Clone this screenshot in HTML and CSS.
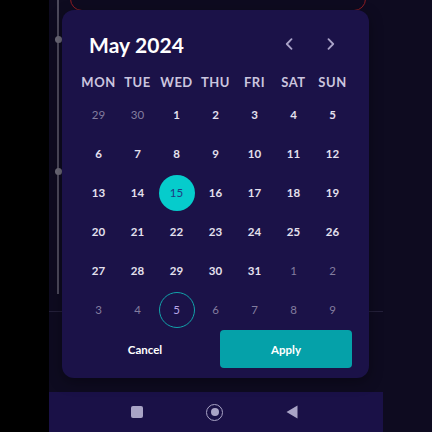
FILE: index.html
```html
<!DOCTYPE html>
<html>
<head>
<meta charset="utf-8">
<link rel="stylesheet" href="styles.css">
</head>
<body>
<div class="bezel"></div>
<div class="screen">
  <div class="app">
    <div class="red-box"></div>
    <div class="timeline">
      <span class="dot dot-1"></span>
      <span class="dot dot-2"></span>
    </div>
    <div class="hline"></div>

    <div class="card">
      <div class="header">
        <div class="title">May 2024</div>
        <div class="navs">
          <button class="chev" aria-label="Previous month">
            <svg width="10" height="12" viewBox="0 0 10 12"><path d="M7.5 1.2 L2.8 6 L7.5 10.8" fill="none" stroke="#aaa3c8" stroke-width="1.8" stroke-linecap="round" stroke-linejoin="round"/></svg>
          </button>
          <button class="chev" aria-label="Next month">
            <svg width="10" height="12" viewBox="0 0 10 12"><path d="M2.5 1.2 L7.2 6 L2.5 10.8" fill="none" stroke="#aaa3c8" stroke-width="1.8" stroke-linecap="round" stroke-linejoin="round"/></svg>
          </button>
        </div>
      </div>
      <div class="weekdays">
        <span>MON</span><span>TUE</span><span>WED</span><span>THU</span><span>FRI</span><span>SAT</span><span>SUN</span>
      </div>
      <div class="days">
        <span class="d other">29</span><span class="d other">30</span><span class="d">1</span><span class="d">2</span><span class="d">3</span><span class="d">4</span><span class="d">5</span>
        <span class="d">6</span><span class="d">7</span><span class="d">8</span><span class="d">9</span><span class="d">10</span><span class="d">11</span><span class="d">12</span>
        <span class="d">13</span><span class="d">14</span><span class="d selected"><i>15</i></span><span class="d">16</span><span class="d">17</span><span class="d">18</span><span class="d">19</span>
        <span class="d">20</span><span class="d">21</span><span class="d">22</span><span class="d">23</span><span class="d">24</span><span class="d">25</span><span class="d">26</span>
        <span class="d">27</span><span class="d">28</span><span class="d">29</span><span class="d">30</span><span class="d">31</span><span class="d other">1</span><span class="d other">2</span>
        <span class="d other">3</span><span class="d other">4</span><span class="d today"><i>5</i></span><span class="d other">6</span><span class="d other">7</span><span class="d other">8</span><span class="d other">9</span>
      </div>
      <div class="actions">
        <button class="btn cancel">Cancel</button>
        <button class="btn apply">Apply</button>
      </div>
    </div>
  </div>
  <div class="navbar">
    <span class="nav-square"></span>
    <span class="nav-home"><span></span></span>
    <svg class="nav-back" width="12" height="14" viewBox="0 0 12 14"><path d="M11.5 0.5 L11.5 13.5 L0.5 7 Z" fill="#a9a4c6"/></svg>
  </div>
</div>
<div class="outside"></div>
</body>
</html>
```

FILE: styles.css
```css
* { box-sizing: border-box; }
html, body { margin: 0; padding: 0; }
body {
  width: 432px;
  height: 432px;
  display: flex;
  overflow: hidden;
  background: #0e0b20;
  font-family: "Lato", "Noto Sans", sans-serif;
}
.bezel { width: 49px; background: #000; flex: none; }
.outside { flex: 1; background: #0e0b20; }
.screen {
  width: 334px;
  flex: none;
  display: flex;
  flex-direction: column;
  background: #0e0b20;
}
.app { flex: 1; position: relative; }
.red-box {
  position: absolute;
  left: 21px;
  width: 296px;
  top: -20px;
  height: 31px;
  border: 1.5px solid #8e1c22;
  border-radius: 12px;
}
.timeline {
  position: absolute;
  left: 8px;
  top: 0;
  width: 2px;
  height: 294px;
  background: #4d4a5c;
}
.dot {
  position: absolute;
  left: -2.5px;
  width: 7px;
  height: 7px;
  border-radius: 50%;
  background: #6c6a78;
}
.dot-1 { top: 36px; }
.dot-2 { top: 168px; }
.hline {
  position: absolute;
  left: 0;
  right: 0;
  top: 311px;
  height: 1px;
  background: #24203a;
}
.card {
  position: absolute;
  left: 13px;
  top: 10px;
  width: 307px;
  height: 368px;
  background: #1b1248;
  border-radius: 12px;
  padding: 20px 17px 10px;
  box-shadow: 0 4px 14px rgba(0,0,0,0.35);
  display: flex;
  flex-direction: column;
}
.header {
  height: 28px;
  display: flex;
  align-items: center;
  justify-content: space-between;
  padding-left: 10px;
  padding-right: 5px;
}
.title {
  color: #ffffff;
  font-size: 21px;
  font-weight: 700;
  letter-spacing: 0.1px;
}
.navs { display: flex; gap: 10px; }
.chev {
  width: 32px;
  height: 28px;
  border: 0;
  background: transparent;
  padding: 0;
  display: flex;
  align-items: center;
  justify-content: center;
}
.weekdays {
  margin-top: 12px;
  height: 24px;
  display: grid;
  grid-template-columns: repeat(7, 39px);
  align-items: center;
  justify-items: center;
  color: #cbc5df;
  font-size: 13px;
  font-weight: 700;
  letter-spacing: 0.5px;
}
.days {
  margin-top: 1px;
  display: grid;
  grid-template-columns: repeat(7, 39px);
  grid-auto-rows: 39px;
}
.d {
  display: flex;
  align-items: center;
  justify-content: center;
  color: #e4e0ee;
  font-size: 11.5px;
  font-weight: 700;
}
.d.other { color: #837d9f; font-weight: 400; }
.d i {
  font-style: normal;
  width: 36px;
  height: 36px;
  border-radius: 50%;
  display: flex;
  align-items: center;
  justify-content: center;
}
.d.selected i { background: #06cccc; color: #1f3c84; font-weight: 400; }
.d.today i { border: 1px solid #12a2aa; color: #b7a4e6; font-weight: 400; }
.actions {
  margin-top: 1px;
  display: flex;
  gap: 9px;
}
.btn {
  width: 132px;
  height: 38px;
  border: 0;
  border-radius: 4px;
  font-family: inherit;
  font-size: 11.5px;
  font-weight: 700;
  color: #ffffff;
  background: transparent;
}
.btn.apply { background: #05a1a9; }
.navbar {
  height: 40px;
  flex: none;
  background: #1a1147;
  display: flex;
  align-items: center;
  justify-content: center;
  gap: 63px;
  padding-right: 3px;
}
.nav-square {
  width: 12px;
  height: 12px;
  border-radius: 2px;
  background: #a9a4c6;
}
.nav-home {
  width: 17px;
  height: 17px;
  border-radius: 50%;
  border: 1.6px solid #a9a4c6;
  display: flex;
  align-items: center;
  justify-content: center;
}
.nav-home span {
  width: 8px;
  height: 8px;
  border-radius: 50%;
  background: #a9a4c6;
}
.nav-back { display: block; }
```
